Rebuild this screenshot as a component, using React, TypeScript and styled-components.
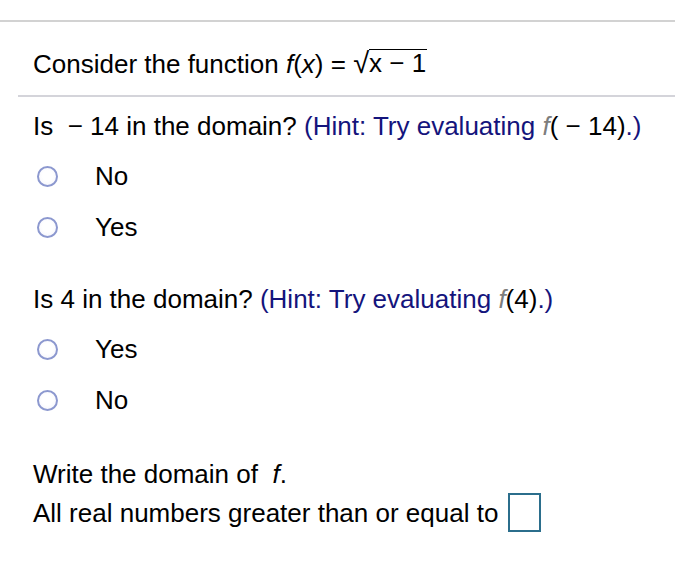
import React from "react";
import styled, { createGlobalStyle } from "styled-components";

const Global = createGlobalStyle`
  html, body { margin: 0; padding: 0; background: #ffffff; }
  body { font-family: "Liberation Sans", Arial, sans-serif; color: #000; }
`;

const FONT = 26;

const Page = styled.div`
  width: 675px;
  padding-top: 20px;
`;

const TopRule = styled.div`
  height: 2px;
  background: #d2d2d2;
`;

const Header = styled.div`
  padding: 27px 0 0 33px;
  font-size: ${FONT}px;
  line-height: 30px;
  height: 46px;
`;

const SubRule = styled.div`
  margin-left: 18px;
  height: 2px;
  background: #d4d4da;
`;

const Body = styled.div`
  padding: 14px 0 0 33px;
`;

const Question = styled.div<{ $top?: number }>`
  font-size: ${FONT}px;
  line-height: 30px;
  margin-top: ${(p) => p.$top ?? 0}px;
`;

const Hint = styled.span`
  color: #14147c;
`;

const Fn = styled.i`
  color: #7d7d7d;
`;

const Plain = styled.span`
  color: #000;
`;

const Options = styled.div`
  display: flex;
  flex-direction: column;
  gap: 21px;
  margin-top: 20px;
`;

const Option = styled.label`
  display: flex;
  align-items: center;
  height: 30px;
  font-size: ${FONT}px;
  line-height: 30px;
`;

const Radio = styled.span`
  box-sizing: border-box;
  width: 21px;
  height: 21px;
  border-radius: 50%;
  border: 2px solid #8c98cf;
  background: radial-gradient(circle at 50% 45%, #ffffff 40%, #f3f3fb 100%);
  margin-left: 4px;
  margin-right: 37px;
  flex: none;
`;

const Root = styled.span`
  display: inline-flex;
  align-items: flex-end;
`;

const RadicalSign = styled.span`
  font-size: 29px;
  line-height: 28px;
`;

const Radicand = styled.span`
  border-top: 1.5px solid #000;
  line-height: 27px;
  padding-right: 1px;
`;

const Domain = styled.div`
  margin-top: 40px;
  font-size: ${FONT}px;
  line-height: 38px;
`;

const AnswerRow = styled.div`
  display: flex;
  align-items: center;
`;

const AnswerBox = styled.span`
  box-sizing: border-box;
  display: inline-block;
  width: 33px;
  height: 39px;
  border: 2px solid #2b6e8c;
  margin-left: 10px;
`;

type Opt = { label: string };

const RadioGroup: React.FC<{ options: Opt[] }> = ({ options }) => (
  <Options>
    {options.map((o) => (
      <Option key={o.label}>
        <Radio />
        {o.label}
      </Option>
    ))}
  </Options>
);

export default function App() {
  return (
    <Page>
      <Global />
      <TopRule />
      <Header>
        Consider the function <i>f</i>(<i>x</i>) ={" "}
        <Root>
          <RadicalSign>√</RadicalSign>
          <Radicand>x − 1</Radicand>
        </Root>
      </Header>
      <SubRule />
      <Body>
        <Question>
          Is&nbsp; − 14 in the domain?{" "}
          <Hint>
            (Hint: Try evaluating <Fn>f</Fn>
            <Plain>( − 14)</Plain>.)
          </Hint>
        </Question>
        <RadioGroup options={[{ label: "No" }, { label: "Yes" }]} />
        <Question $top={42}>
          Is 4 in the domain?{" "}
          <Hint>
            (Hint: Try evaluating <Fn>f</Fn>
            <Plain>(4)</Plain>.)
          </Hint>
        </Question>
        <RadioGroup options={[{ label: "Yes" }, { label: "No" }]} />
        <Domain>
          <div>
            Write the domain of&nbsp; <i>f</i>.
          </div>
          <AnswerRow>
            All real numbers greater than or equal to
            <AnswerBox />
          </AnswerRow>
        </Domain>
      </Body>
    </Page>
  );
}
